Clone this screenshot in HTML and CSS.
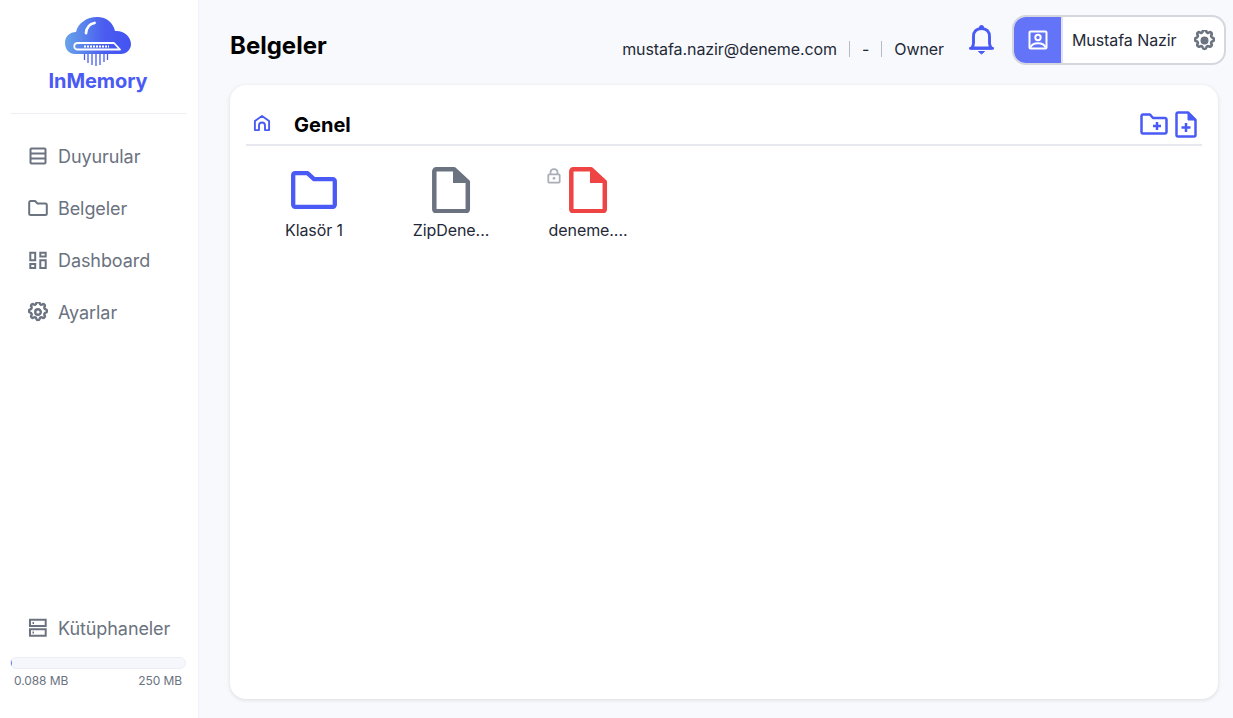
FILE: index.html
```html
<!DOCTYPE html>
<html lang="tr">
<head>
  <meta charset="UTF-8">
  <meta name="viewport" content="width=device-width, initial-scale=1.0">
  <title>Belgeler - InMemory</title>
  <link rel="stylesheet" href="styles.css">
</head>
<body>
  <div class="app">
    <aside class="sidebar">
      <div class="brand">
        <svg class="brand-logo" viewBox="0 0 66 50" width="66" height="50">
          <defs>
            <linearGradient id="cloudGrad" x1="0" y1="0" x2="1" y2="0">
              <stop offset="0" stop-color="#68a4e8"/>
              <stop offset="0.6" stop-color="#4a5cf0"/>
              <stop offset="1" stop-color="#4353f2"/>
            </linearGradient>
          </defs>
          <path d="M10 37C3 37 0 31 0 26C0 19 5 15 11 15C13 6 22 0 32 0C42 0 48 6 50 14C58 13 66 19 66 27C66 33 61 37 56 37Z" fill="url(#cloudGrad)"/>
          <path d="M21 16C21.500 11 24.500 7 29.500 6" fill="none" stroke="#fff" stroke-width="2.800" stroke-linecap="round"/>
          <path d="M49 26L55 32.500H13C8 32.500 8 26 13 26Z" fill="none" stroke="#fff" stroke-width="1.800" stroke-linejoin="round"/>
          <path d="M19 29.500H44" stroke="#fff" stroke-width="1.800" stroke-dasharray="2 1"/>
          <path d="M19.500 37V43M23 37V46M27 37V48M31 37V49M35 37V48M39 37V45M42.500 37V43" stroke="#4a5cf0" stroke-width="1.300"/>
        </svg>
        <div class="brand-name">InMemory</div>
      </div>

      <nav class="menu">
        <a class="menu-item">
          <svg class="icon" viewBox="0 0 20 20" width="20" height="20"><path d="M3.500 2.500h13a1 1 0 0 1 1 1v13a1 1 0 0 1-1 1h-13a1 1 0 0 1-1-1v-13a1 1 0 0 1 1-1zM2.500 7.500h15M2.500 12.500h15"/></svg>
          Duyurular
        </a>
        <a class="menu-item">
          <svg class="icon" viewBox="0 0 20 20" width="20" height="20"><path d="M1.200 4.500a1.500 1.500 0 0 1 1.500-1.500H7l2.500 2.500h7.800a1.500 1.500 0 0 1 1.500 1.500v8.500a1.500 1.500 0 0 1-1.500 1.500H2.700a1.500 1.500 0 0 1-1.500-1.500z"/></svg>
          Belgeler
        </a>
        <a class="menu-item">
          <svg class="icon" viewBox="0 0 20 20" width="20" height="20"><path d="M2.300 2.700h4.900v7.500H2.300zM2.300 14h4.900v4H2.300zM12.300 2.700h5.400v3.800h-5.400zM12.300 10.200h5.400V18h-5.400z"/></svg>
          Dashboard
        </a>
        <a class="menu-item">
          <svg class="icon icon-gear" viewBox="2 2 20 20" width="20" height="20"><path d="M10.300 3.300c.4-1.800 3-1.800 3.400 0a1.700 1.700 0 0 0 2.600 1.100c1.500-1 3.300.8 2.300 2.300a1.700 1.700 0 0 0 1.100 2.600c1.800.4 1.800 3 0 3.400a1.700 1.700 0 0 0-1.100 2.600c1 1.500-.8 3.300-2.300 2.300a1.700 1.700 0 0 0-2.600 1.100c-.4 1.800-3 1.800-3.400 0a1.700 1.700 0 0 0-2.600-1.100c-1.500 1-3.300-.8-2.300-2.300a1.700 1.700 0 0 0-1.100-2.600c-1.800-.4-1.800-3 0-3.400a1.700 1.700 0 0 0 1.100-2.600c-1-1.500.8-3.300 2.300-2.300a1.700 1.700 0 0 0 2.600-1.100z"/><circle cx="12" cy="12" r="2.800"/></svg>
          Ayarlar
        </a>
      </nav>

      <div class="sidebar-bottom">
        <a class="menu-item">
          <svg class="icon" viewBox="0 0 20 20" width="20" height="20"><path d="M2 1.700h15.700V8H2zM2 11.300h15.700v6.400H2zM4.500 4.900h1.500M4.500 14.500h1.500"/></svg>
          Kütüphaneler
        </a>
        <div class="storage-bar"><div class="storage-fill" style="width: 0.4%"></div></div>
        <div class="storage-text"><span>0.088 MB</span><span>250 MB</span></div>
      </div>
    </aside>

    <main class="content">
      <header class="topbar">
        <h1 class="page-title">Belgeler</h1>
        <div class="account">
          <span>mustafa.nazir@deneme.com</span>
          <span class="sep"></span>
          <span>-</span>
          <span class="sep"></span>
          <span>Owner</span>
        </div>
        <svg class="bell" viewBox="0 0 25 30" width="25" height="30"><circle cx="12.500" cy="2.500" r="2.500" fill="#4a5af5"/><path d="M12.500 3.500c-5 0-8 3-8 8v6.500c0 2.500-.8 4-2 5h20c-1.200-1-2-2.500-2-5v-6.500c0-5-3-8-8-8z" fill="none" stroke="#4a5af5" stroke-width="2.900" stroke-linejoin="round"/><path d="M1.300 23.300h22.400" stroke="#4a5af5" stroke-width="2.700" stroke-linecap="round"/><path d="M9.500 26.500h6l-3 2.500z" fill="#4a5af5" stroke="#4a5af5" stroke-linejoin="round"/></svg>
        <div class="user-box">
          <div class="user-avatar">
            <svg viewBox="0 0 20 20" width="20" height="20"><path d="M2.500 1.500h15a1 1 0 0 1 1 1v15a1 1 0 0 1-1 1h-15a1 1 0 0 1-1-1v-15a1 1 0 0 1 1-1z" fill="none" stroke="#fff" stroke-width="2"/><circle cx="10" cy="7.500" r="2.700" fill="none" stroke="#fff" stroke-width="2"/><path d="M2.500 17.500c1-3 4-4.200 7.500-4.200s6.500 1.200 7.500 4.200" fill="none" stroke="#fff" stroke-width="2"/></svg>
          </div>
          <span class="user-name">Mustafa Nazir</span>
          <svg class="user-gear" viewBox="2 2 20 20" width="21" height="21"><path d="M10.300 3.300c.4-1.800 3-1.800 3.400 0a1.700 1.700 0 0 0 2.600 1.100c1.500-1 3.300.8 2.300 2.300a1.700 1.700 0 0 0 1.100 2.600c1.800.4 1.800 3 0 3.400a1.700 1.700 0 0 0-1.100 2.600c1 1.500-.8 3.300-2.300 2.300a1.700 1.700 0 0 0-2.600 1.100c-.4 1.800-3 1.800-3.400 0a1.700 1.700 0 0 0-2.600-1.100c-1.500 1-3.300-.8-2.300-2.300a1.700 1.700 0 0 0-1.100-2.600c-1.800-.4-1.800-3 0-3.400a1.700 1.700 0 0 0 1.100-2.600c-1-1.500.8-3.300 2.300-2.300a1.700 1.700 0 0 0 2.600-1.100z" fill="none" stroke="#6b7280" stroke-width="2.500"/><circle cx="12" cy="12" r="3.800" fill="#6b7280"/></svg>
        </div>
      </header>

      <section class="card">
        <div class="card-head">
          <svg class="home-icon" viewBox="0 0 18 18" width="18" height="18"><path d="M1.900 16.100V7L9 1.900 16.100 7v9.100H12v-4.600a3 3 0 0 0-6 0v4.600z" fill="none" stroke="#4a5af5" stroke-width="1.900" stroke-linejoin="round"/></svg>
          <h2 class="folder-title">Genel</h2>
          <div class="card-actions">
            <svg viewBox="0 0 28 22" width="28" height="22"><path d="M1.500 3a1.500 1.500 0 0 1 1.500-1.500h7l3 3.500h12a1.500 1.500 0 0 1 1.500 1.500V19a1.500 1.500 0 0 1-1.500 1.500H3A1.500 1.500 0 0 1 1.500 19z" fill="none" stroke="#4a5af5" stroke-width="2.500" stroke-linejoin="round"/><path d="M17 9v8M13 13h8" stroke="#4a5af5" stroke-width="2.500"/></svg>
            <svg viewBox="0 0 22 27" width="22" height="27"><path d="M3 1.500h10L20.500 9v15a1.500 1.500 0 0 1-1.500 1.500H3A1.500 1.500 0 0 1 1.500 24V3A1.500 1.500 0 0 1 3 1.500z" fill="none" stroke="#4a5af5" stroke-width="2.500" stroke-linejoin="round"/><path d="M13 1.500L20.500 9H13z" fill="#4a5af5" stroke="#4a5af5" stroke-linejoin="round"/><path d="M11 12v9M6.500 16.500h9" stroke="#4a5af5" stroke-width="2.500"/></svg>
          </div>
        </div>

        <div class="file-grid">
          <div class="file-item">
            <svg class="file-icon" viewBox="0 0 48 47" width="48" height="47"><path d="M3.200 9a2 2 0 0 1 2-1.800h12.300L24 13.200h18.800a2 2 0 0 1 2 2v23.600a2 2 0 0 1-2 2H5.200a2 2 0 0 1-2-2z" fill="none" stroke="#4a5af5" stroke-width="4.300" stroke-linejoin="round"/></svg>
            <span class="file-name">Klasör 1</span>
          </div>
          <div class="file-item">
            <svg class="file-icon" viewBox="0 0 48 47" width="48" height="47"><path d="M9.300 3.200H27L40.800 16v27.300a2 2 0 0 1-2 2H9.300a2 2 0 0 1-2-2V5.200a2 2 0 0 1 2-2z" fill="none" stroke="#6b7280" stroke-width="4.500" stroke-linejoin="round"/><path d="M26 1l17 15v1H26z" fill="#6b7280"/></svg>
            <span class="file-name">ZipDene...</span>
          </div>
          <div class="file-item">
            <svg class="lock-icon" viewBox="0 0 16 18" width="14" height="16"><path d="M4 7V4.500a4 3.500 0 0 1 8 0V7M2.500 7h11a1 1 0 0 1 1 1v7.500a1 1 0 0 1-1 1h-11a1 1 0 0 1-1-1V8a1 1 0 0 1 1-1z" fill="none" stroke="#a9adb8" stroke-width="2"/><circle cx="8" cy="11.700" r="1.500" fill="#a9adb8"/></svg>
            <svg class="file-icon" viewBox="0 0 48 47" width="48" height="47"><path d="M9.300 3.200H27L40.800 16v27.300a2 2 0 0 1-2 2H9.300a2 2 0 0 1-2-2V5.200a2 2 0 0 1 2-2z" fill="none" stroke="#ef4444" stroke-width="4.500" stroke-linejoin="round"/><path d="M26 1l17 15v1H26z" fill="#ef4444"/></svg>
            <span class="file-name">deneme....</span>
          </div>
        </div>
      </section>
    </main>
  </div>
</body>
</html>
```

FILE: styles.css
```css
* {
  box-sizing: border-box;
}
html, body {
  height: 100%;
}
body {
  margin: 0;
  font-family: 'Inter', 'Liberation Sans', sans-serif;
  letter-spacing: -0.005em;
  background-color: #f8f9fd;
  color: #111827;
  overflow: hidden;
}
.app {
  display: flex;
  height: 718px;
}

/* sol menu */
.sidebar {
  width: 199px;
  flex-shrink: 0;
  display: flex;
  flex-direction: column;
  background-color: white;
  border-right: 1px solid #f1f2f8;
  padding: 0 13px 0 12px;
}
.brand {
  display: flex;
  flex-direction: column;
  align-items: center;
  height: 114px;
  padding-top: 17px;
  margin: 0 -1px 0 -2px;
  border-bottom: 1px solid #eeeff4;
}
.brand-logo {
  display: block;
}
.brand-name {
  margin-top: 2px;
  font-size: 20px;
  font-weight: 700;
  line-height: 24px;
  color: #4a5af5;
}
.menu {
  display: flex;
  flex-direction: column;
  gap: 12px;
  margin-top: 22px;
  flex: 1;
}
.menu-item {
  display: flex;
  align-items: center;
  gap: 10px;
  height: 40px;
  padding-left: 16px;
  font-size: 18px;
  color: #6b7280;
}
.icon {
  fill: none;
  stroke: #6b7280;
  stroke-width: 2;
  flex-shrink: 0;
}
.icon-gear {
  stroke-width: 2.400;
}
.sidebar-bottom {
  padding-bottom: 29px;
}
.storage-bar {
  height: 12px;
  margin: 9px -1px 0 -2px;
  border: 1px solid #eceef6;
  border-radius: 6px;
  background-color: #f6f7fc;
  overflow: hidden;
}
.storage-fill {
  height: 100%;
  background-color: #6474f8;
}
.storage-text {
  display: flex;
  justify-content: space-between;
  margin: 4px 3px 0 2px;
  font-size: 12px;
  line-height: 16px;
  color: #6b7280;
}

/* ust bar */
.content {
  flex: 1;
  min-width: 0;
  display: flex;
  flex-direction: column;
  padding: 15px 7px 19px 31px;
}
.topbar {
  display: flex;
  align-items: center;
  height: 50px;
}
.page-title {
  margin: 10px auto 0 0;
  font-size: 24px;
  font-weight: 700;
  letter-spacing: 0;
  color: black;
}
.account {
  display: flex;
  align-items: center;
  gap: 12px;
  margin-top: 18px;
  font-size: 16px;
  color: #1f2937;
}
.sep {
  width: 1px;
  height: 16px;
  background-color: #b6bac4;
}
.bell {
  margin: 0 18px 0 25px;
}
.user-box {
  display: flex;
  align-items: center;
  width: 214px;
  height: 50px;
  background-color: white;
  border: 2px solid #d5d7df;
  border-radius: 14px;
  overflow: hidden;
}
.user-avatar {
  width: 49px;
  height: 100%;
  flex-shrink: 0;
  display: flex;
  align-items: center;
  justify-content: center;
  background-color: #6474f8;
  border-right: 2px solid #e2e0fb;
}
.user-name {
  margin-left: 9px;
  font-size: 16px;
  color: #1f2937;
}
.user-gear {
  margin-left: auto;
  margin-right: 9px;
}

/* belgeler karti */
.card {
  flex: 1;
  margin-top: 20px;
  margin-right: 8px;
  padding: 0 16px;
  background-color: white;
  border-radius: 16px;
  box-shadow: 0 1px 4px rgba(0, 0, 0, 0.12);
}
.card-head {
  display: flex;
  align-items: center;
  height: 61px;
  padding: 21px 5px 0 7px;
  border-bottom: 2px solid #e8e9ee;
}
.home-icon {
  display: block;
  margin-top: -4px;
}
.folder-title {
  margin: 0 0 0 23px;
  font-size: 20px;
  font-weight: 700;
  letter-spacing: 0;
  color: black;
}
.card-actions {
  display: flex;
  align-items: center;
  gap: 7px;
  margin-left: auto;
  margin-top: -2px;
}
.card-actions svg {
  display: block;
}
.file-grid {
  display: flex;
  gap: 57px;
  padding-top: 20px;
  padding-left: 28px;
}
.file-item {
  position: relative;
  width: 80px;
  display: flex;
  flex-direction: column;
  align-items: center;
}
.file-icon {
  display: block;
}
.file-name {
  margin-top: 7px;
  font-size: 16px;
  line-height: 20px;
  color: #1f2937;
  white-space: nowrap;
}
.lock-icon {
  position: absolute;
  left: -1px;
  top: 2px;
}
```
